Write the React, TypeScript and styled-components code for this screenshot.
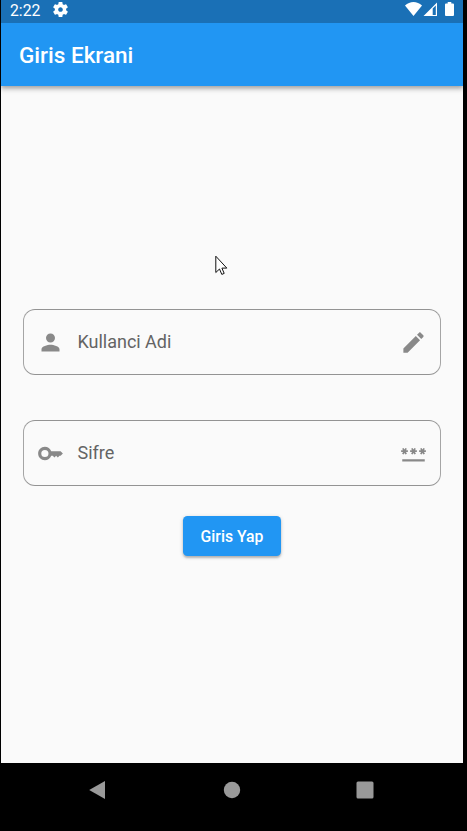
import React from 'react';
import styled, { createGlobalStyle } from 'styled-components';

const GlobalStyle = createGlobalStyle`
  * { box-sizing: border-box; }
  body { margin: 0; background: #000; font-family: Roboto, sans-serif; overflow: hidden; }
`;

const Device = styled.div`
  position: relative;
  width: 467px;
  height: 831px;
  padding: 0 4px 0 1px;
  display: flex;
  flex-direction: column;
  background: #000;
`;

const StatusBar = styled.header`
  height: 23px;
  flex: none;
  display: flex;
  align-items: flex-start;
  padding-right: 9px;
  background: #1a70b6;
  color: #fff;
`;

const Clock = styled.span`
  width: 43px;
  padding: 1px 0 0 9px;
  font-size: 15.75px;
  line-height: 19px;
  white-space: nowrap;
`;

const StatusIcon = styled.svg<{ $w: number; $h: number; $left: string }>`
  flex: none;
  width: ${(p) => p.$w}px;
  height: ${(p) => p.$h}px;
  margin-left: ${(p) => p.$left};
  margin-top: 2px;
  fill: #fff;
`;

const AppBar = styled.div`
  height: 63px;
  flex: none;
  display: flex;
  align-items: center;
  padding-left: 18px;
  background: #2196f3;
  box-shadow: 0 2px 4px rgba(0, 0, 0, 0.26), 0 4px 5px rgba(0, 0, 0, 0.12);
  clip-path: inset(0 0 -14px 0);
  z-index: 1;
`;

const Title = styled.h1`
  margin: 0;
  color: #fff;
  font-size: 22.5px;
  font-weight: 500;
  line-height: 26px;
`;

const Body = styled.main`
  height: 677px;
  flex: none;
  display: flex;
  flex-direction: column;
  align-items: center;
  padding-top: 223px;
  background: #fafafa;
`;

const Field = styled.label<{ $gap: number }>`
  width: 418px;
  height: 66px;
  margin-bottom: ${(p) => p.$gap}px;
  padding: 0 13px 0 12.5px;
  display: flex;
  align-items: center;
  border: 1px solid #939393;
  border-left-color: #a5a5a5;
  border-right-color: #a5a5a5;
  border-radius: 12px;
`;

const FieldIcon = styled.svg`
  flex: none;
  width: 27px;
  height: 27px;
  fill: #898989;
`;

const FieldLabel = styled.span`
  flex: 1;
  padding-left: 14px;
  color: #646464;
  font-size: 18px;
  line-height: 22px;
  letter-spacing: -0.02px;
`;

const SubmitButton = styled.button`
  width: 98px;
  height: 40px;
  padding: 1px 0 0;
  border: 0;
  border-radius: 4.5px;
  background: #2196f3;
  color: #fff;
  font: 500 15.75px/20px Roboto, sans-serif;
  letter-spacing: 0;
  white-space: nowrap;
  box-shadow: 0 2px 2px rgba(0, 0, 0, 0.2), 0 1px 4px rgba(0, 0, 0, 0.16);
`;

const NavBar = styled.nav`
  flex: 1;
  display: flex;
  align-items: flex-start;
  padding: 16px 0 0 86px;
  gap: 112px;
`;

const NavIcon = styled.svg`
  width: 22px;
  height: 22px;
  fill: #999;
`;

const Pointer = styled.svg`
  position: absolute;
  left: 215px;
  top: 255px;
  width: 13px;
  height: 21px;
`;

const App = () => (
  <Device>
    <GlobalStyle />
    <StatusBar>
      <Clock>2:22</Clock>
      <StatusIcon viewBox="2 2 20 20" $w={15} $h={15} $left="9px">
        <path d="M19.43 12.98c.04-.32.07-.64.07-.98s-.03-.66-.07-.98l2.11-1.65c.19-.15.24-.42.12-.64l-2-3.46c-.12-.22-.39-.3-.61-.22l-2.49 1c-.52-.4-1.08-.73-1.69-.98l-.38-2.65C14.46 2.18 14.25 2 14 2h-4c-.25 0-.46.18-.49.42l-.38 2.65c-.61.25-1.17.59-1.69.98l-2.49-1c-.23-.09-.49 0-.61.22l-2 3.46c-.13.22-.07.49.12.64l2.11 1.65c-.04.32-.07.65-.07.98s.03.66.07.98l-2.11 1.65c-.19.15-.24.42-.12.64l2 3.46c.12.22.39.3.61.22l2.49-1c.52.4 1.08.73 1.69.98l.38 2.65c.03.24.24.42.49.42h4c.25 0 .46-.18.49-.42l.38-2.65c.61-.25 1.17-.59 1.69-.98l2.49 1c.23.09.49 0 .61-.22l2-3.46c.12-.22.07-.49-.12-.64l-2.11-1.65zM12 15.1c-1.71 0-3.1-1.39-3.1-3.1s1.39-3.1 3.1-3.1 3.1 1.39 3.1 3.1-1.39 3.1-3.1 3.1z" />
      </StatusIcon>
      <StatusIcon viewBox="0 0 17 14" $w={17} $h={14} $left="auto">
        <path d="M0 3.6C4.8-1.2 12.2-1.2 17 3.6L8.5 14z" />
      </StatusIcon>
      <StatusIcon viewBox="0 0 14 14" $w={14} $h={14} $left="1px">
        <path fillRule="evenodd" d="M14 .5V14H.5zM9.7 6.4V12.9H12.8V3.6z" />
      </StatusIcon>
      <StatusIcon viewBox="0 0 9 14" $w={9} $h={14} $left="8px">
        <path d="M2.7 0h3.6v1.4H8q1 0 1 1V13q0 1-1 1H1q-1 0-1-1V2.4q0-1 1-1h1.7z" />
      </StatusIcon>
    </StatusBar>
    <AppBar>
      <Title>Giris Ekrani</Title>
    </AppBar>
    <Body>
      <Field $gap={45}>
        <FieldIcon viewBox="0 0 24 24">
          <path d="M12 12c2.21 0 4-1.79 4-4s-1.79-4-4-4-4 1.79-4 4 1.79 4 4 4zm0 2c-2.67 0-8 1.34-8 4v2h16v-2c0-2.66-5.33-4-8-4z" />
        </FieldIcon>
        <FieldLabel>Kullanci Adi</FieldLabel>
        <FieldIcon viewBox="0 0 24 24">
          <path d="M3 17.25V21h3.75L17.81 9.94l-3.75-3.75L3 17.25zM20.71 7.04c.39-.39.39-1.02 0-1.41l-2.34-2.34c-.39-.39-1.02-.39-1.41 0l-1.83 1.83 3.75 3.75 1.83-1.83z" />
        </FieldIcon>
      </Field>
      <Field $gap={30}>
        <FieldIcon viewBox="0 0 24 24">
          <path d="M12.65 10C11.83 7.67 9.61 6 7 6c-3.31 0-6 2.69-6 6s2.69 6 6 6c2.61 0 4.83-1.67 5.65-4H14l1.5 1.5L17 14l1.5 1.5L20 14h1l2-2-2-2zM7 15.2a3.2 3.2 0 1 1 0-6.4 3.2 3.2 0 0 1 0 6.4z" />
        </FieldIcon>
        <FieldLabel>Sifre</FieldLabel>
        <FieldIcon viewBox="0 0 24 24">
          <path d="M2 17h20v2H2zM3.15 12.95l.85-1.48.85 1.48 1.3-.75-.85-1.48H7v-1.5H5.3l.85-1.47L4.85 7 4 8.47 3.15 7l-1.3.75.85 1.47H1v1.5h1.7l-.85 1.48zM11.15 12.95l.85-1.48.85 1.48 1.3-.75-.85-1.48H15v-1.5h-1.7l.85-1.47-1.3-.75L12 8.47 11.15 7l-1.3.75.85 1.47H9v1.5h1.7l-.85 1.48zM19.15 12.95l.85-1.48.85 1.48 1.3-.75-.85-1.48H23v-1.5h-1.7l.85-1.47-1.3-.75L20 8.47 19.15 7l-1.3.75.85 1.47H17v1.5h1.7l-.85 1.48z" />
        </FieldIcon>
      </Field>
      <SubmitButton>Giris Yap</SubmitButton>
    </Body>
    <NavBar>
      <NavIcon viewBox="0 0 22 22"><path d="M2.2 11 18 2v18z" /></NavIcon>
      <NavIcon viewBox="0 0 22 22"><circle cx="11" cy="11" r="8.2" /></NavIcon>
      <NavIcon viewBox="0 0 22 22"><rect x="1.5" y="2.5" width="17" height="17" rx="1.5" /></NavIcon>
    </NavBar>
    <Pointer viewBox="0 0 13 21">
      <path d="M.8 1.2V17.5L4.5 14l2.3 5.4 2.4-1-2.3-5.3h4.9z" fill="#fff" stroke="#111" strokeWidth="1" />
    </Pointer>
  </Device>
);

export default App;
